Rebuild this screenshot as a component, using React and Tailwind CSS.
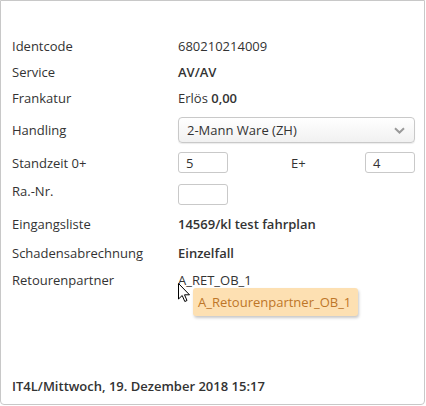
import React from "react";

function Row({ label, children, className = "" }) {
  return (
    <div className={`flex items-center ${className}`}>
      <div className="w-[166px] shrink-0">{label}</div>
      <div className="flex-1 flex items-center">{children}</div>
    </div>
  );
}

export default function App() {
  return (
    <div
      className="relative w-[425px] h-[405px] bg-white border border-[#c8c8c8] rounded-b-[4px] flex flex-col text-[13px] leading-[18px] text-[#333]"
      style={{ fontFamily: '"Open Sans", "Noto Sans", sans-serif' }}
    >
      <div className="pl-[11px] pr-[10px] pt-[32px] flex flex-col">
        <Row label="Identcode" className="h-[26px]">680210214009</Row>
        <Row label="Service" className="h-[26px]">
          <span className="font-semibold">AV/AV</span>
        </Row>
        <Row label="Frankatur" className="h-[26px]">
          <span>
            Erlös <span className="font-semibold">0,00</span>
          </span>
        </Row>
        <Row label="Handling" className="h-[26px] mt-[6px]">
          <div className="w-[237px] h-[26px] border border-[#c9c9c9] rounded-[4px] bg-gradient-to-b from-white to-[#f1f1f1] shadow-[0_1px_1px_rgba(0,0,0,0.08)] flex items-center justify-between pl-[8px] pr-[9px]">
            <span>2-Mann Ware (ZH)</span>
            <svg width="11" height="7" viewBox="0 0 11 7">
              <path d="M1 1.2 L5.5 5.5 L10 1.2" fill="none" stroke="#9a9a9a" strokeWidth="2" />
            </svg>
          </div>
        </Row>
        <Row label="Standzeit 0+" className="h-[21px] mt-[9px]">
          <div className="w-[50px] h-[21px] border border-[#c9c9c9] rounded-[3px] pl-[7px] flex items-center">5</div>
          <div className="w-[63px]" />
          <div className="w-[74px]">E+</div>
          <div className="w-[50px] h-[21px] border border-[#c9c9c9] rounded-[3px] pl-[7px] flex items-center">4</div>
        </Row>
        <div className="flex items-start mt-[4px]">
          <div className="w-[166px] shrink-0 mt-[5px]">Ra.-Nr.</div>
          <div className="mt-[7px] w-[50px] h-[21px] border border-[#c9c9c9] rounded-[3px]" />
        </div>
        <Row label="Eingangsliste" className="h-[26px] mt-[6px]">
          <span className="font-semibold">14569/kl test fahrplan</span>
        </Row>
        <Row label="Schadensabrechnung" className="h-[26px] mt-[3px]">
          <span className="font-semibold">Einzelfall</span>
        </Row>
        <Row label="Retourenpartner" className="h-[28px]">
          A_RET_OB_1
        </Row>
      </div>
      <div className="mt-auto pl-[11px] pb-[9px] font-semibold">
        IT4L/Mittwoch, 19. Dezember 2018 15:17
      </div>

      <div className="absolute left-[192px] top-[287px] w-[165px] h-[28px] rounded-[3px] bg-[#fde0b2] shadow-[1px_2px_3px_rgba(0,0,0,0.22)] flex items-center pl-[5px] text-[#bd7628]">
        A_Retourenpartner_OB_1
      </div>
      <svg
        className="absolute left-[177px] top-[282px]"
        width="13"
        height="20"
        viewBox="0 0 13 20"
      >
        <path
          d="M0.5 0.5 L0.5 16 L4.2 12.5 L6.8 18.5 L9 17.5 L6.5 11.8 L11.5 11.8 Z"
          fill="#fff"
          stroke="#000"
          strokeWidth="1"
          strokeLinejoin="miter"
        />
      </svg>
    </div>
  );
}
